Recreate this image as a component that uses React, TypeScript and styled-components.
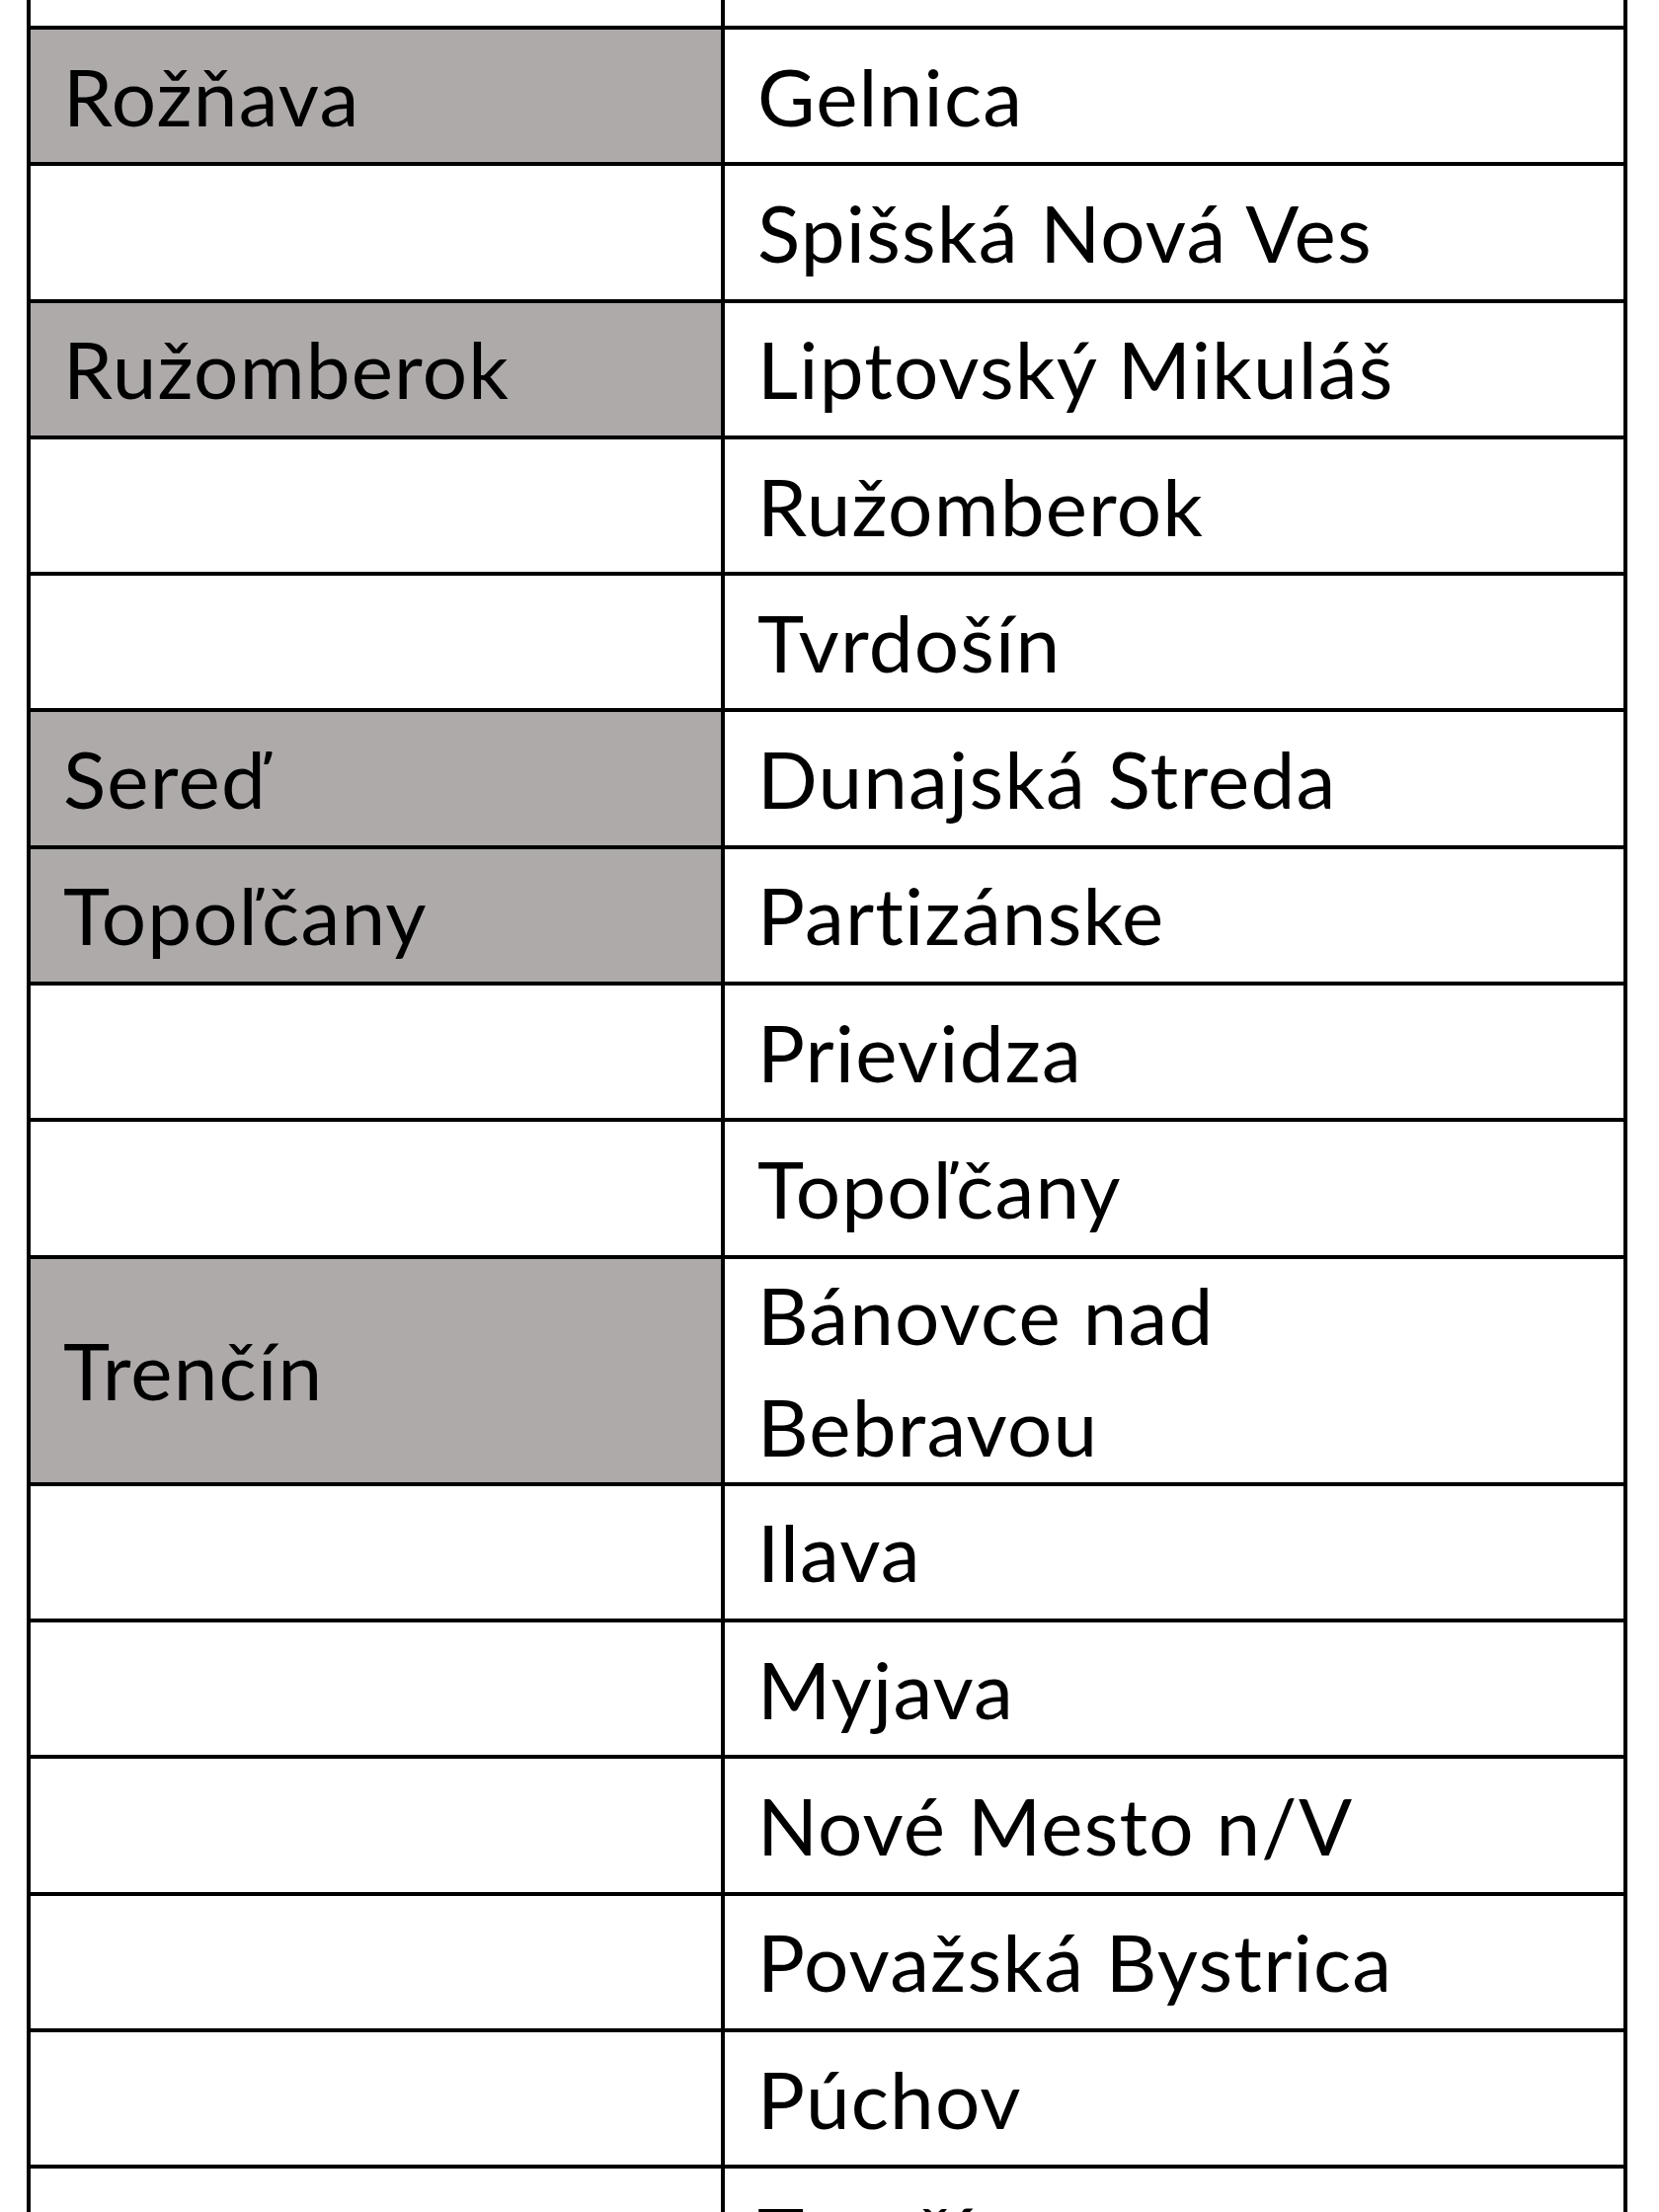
import React from "react";
import styled, { createGlobalStyle } from "styled-components";

const GlobalStyle = createGlobalStyle`
  html, body {
    margin: 0;
    padding: 0;
    background: #ffffff;
    overflow: hidden;
  }
  body {
    font-family: "Lato", "Open Sans", sans-serif;
    color: #000000;
  }
`;

// TABLE

const StyledTable = styled.div`
  width: 1621px;
  box-sizing: border-box;
  margin: -108.3px 0 0 27px;
  border-left: 4px solid #000000;
  border-right: 4px solid #000000;
`;

const StyledRow = styled.div`
  display: grid;
  grid-template-columns: 703px 1fr;
  border-bottom: 4px solid #000000;
`;

const StyledCell = styled.div<{ $shaded?: boolean; $divider?: boolean }>`
  display: flex;
  align-items: center;
  min-height: 134.3px;
  padding: 0 0 0 33px;
  background-color: ${(p) => (p.$shaded ? "#aeaaaa" : "#ffffff")};
  border-right: ${(p) => (p.$divider ? "4px solid #000000" : "none")};
  font-size: 80px;
  line-height: 113px;
  letter-spacing: 1.2px;
  white-space: nowrap;
`;

const StyledLines = styled.div`
  display: flex;
  flex-direction: column;
`;

type RowType = {
  district: string;
  towns: Array<string>;
};

const rows: Array<RowType> = [
  { district: "", towns: [""] },
  { district: "Rožňava", towns: ["Gelnica"] },
  { district: "", towns: ["Spišská Nová Ves"] },
  { district: "Ružomberok", towns: ["Liptovský Mikuláš"] },
  { district: "", towns: ["Ružomberok"] },
  { district: "", towns: ["Tvrdošín"] },
  { district: "Sereď", towns: ["Dunajská Streda"] },
  { district: "Topoľčany", towns: ["Partizánske"] },
  { district: "", towns: ["Prievidza"] },
  { district: "", towns: ["Topoľčany"] },
  { district: "Trenčín", towns: ["Bánovce nad", "Bebravou"] },
  { district: "", towns: ["Ilava"] },
  { district: "", towns: ["Myjava"] },
  { district: "", towns: ["Nové Mesto n/V"] },
  { district: "", towns: ["Považská Bystrica"] },
  { district: "", towns: ["Púchov"] },
  { district: "", towns: ["Trenčín"] },
];

const App = () => {
  return (
    <>
      <GlobalStyle />
      <StyledTable>
        {rows.map((row, i) => (
          <StyledRow key={i}>
            <StyledCell $shaded={row.district !== ""} $divider>
              {row.district}
            </StyledCell>
            <StyledCell>
              <StyledLines>
                {row.towns.map((town, j) => (
                  <span key={j}>{town}</span>
                ))}
              </StyledLines>
            </StyledCell>
          </StyledRow>
        ))}
      </StyledTable>
    </>
  );
};

export default App;
